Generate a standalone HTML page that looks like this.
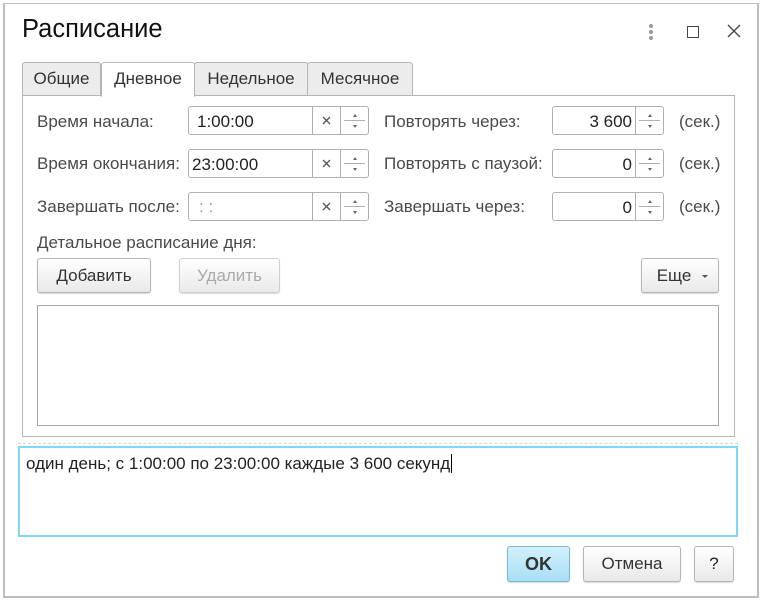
<!DOCTYPE html>
<html><head><meta charset="utf-8"><style>
*{box-sizing:border-box;margin:0;padding:0}
body{width:763px;height:603px;background:#fff;font-family:"Liberation Sans",sans-serif;font-size:17px;color:#4a4a4a;position:relative;overflow:hidden}
.a{position:absolute}
.win{left:3px;top:3px;width:756px;height:595px;border:2px solid #bdbdbd;border-top-width:1px;border-right-width:2px}
.tab{position:absolute;top:62px;height:34px;border:1px solid #b5b5b5;background:#ececec;border-radius:3px 3px 0 0;text-align:center;line-height:32px;color:#333}
.inp{position:absolute;border:1px solid #b0b0b0;border-radius:3px;height:29px;background:#fff}
.lbl{position:absolute;line-height:20px}
.btn{position:absolute;border:1px solid #b5b5b5;border-radius:3px;background:linear-gradient(#fff,#e9e9e9);text-align:center;color:#333;box-shadow:0 1px 1px rgba(0,0,0,.15)}
.spin{position:absolute;top:0;bottom:0;border-left:1px solid #b0b0b0}
.spin:before{content:"";position:absolute;left:3px;right:3px;top:13px;border-top:1px solid #b0b0b0}
.spin i{position:absolute;left:50%;width:0;height:0;margin-left:-2px;border-left:2px solid transparent;border-right:2px solid transparent}
</style></head><body>
<div class="a win"></div>
<div class="a" style="left:22px;top:15px;font-size:25.5px;color:#111">Расписание</div>
<div class="a" style="left:649px;top:24px;width:4px;height:16px">
<div class="a" style="left:0;top:0;width:4px;height:4px;border-radius:2px;background:#999"></div>
<div class="a" style="left:0;top:6px;width:4px;height:4px;border-radius:2px;background:#999"></div>
<div class="a" style="left:0;top:12px;width:4px;height:4px;border-radius:2px;background:#999"></div></div>
<div class="a" style="left:687px;top:26px;width:12px;height:12px;border:1.5px solid #444"></div>
<svg class="a" style="left:727px;top:24px" width="14" height="14"><path d="M1 1L13 13M13 1L1 13" stroke="#444" stroke-width="1.3"/></svg>

<div class="a" style="left:22px;top:95px;width:713px;height:342px;border:1px solid #b5b5b5"></div>
<div class="tab" style="left:22px;width:79px">Общие</div>
<div class="tab" style="left:101px;width:94px;background:#fff;border-bottom-color:#fff;height:35px">Дневное</div>
<div class="tab" style="left:194px;width:114px">Недельное</div>
<div class="tab" style="left:307px;width:106px">Месячное</div>

<div class="lbl" style="left:37px;top:112px">Время начала:</div>
<div class="lbl" style="left:37px;top:154px">Время окончания:</div>
<div class="lbl" style="left:37px;top:197px">Завершать после:</div>

<div class="inp" style="left:188px;top:106px;width:181px"><span class="a" style="left:8px;top:5px;color:#222">1:00:00</span></div>
<div class="inp" style="left:188px;top:149px;width:181px"><span class="a" style="left:3px;top:5px;color:#222">23:00:00</span></div>
<div class="inp" style="left:188px;top:192px;width:181px"><span class="a" style="left:10px;top:4px;color:#999">: :</span></div>

<div class="lbl" style="left:384px;top:112px">Повторять через:</div>
<div class="lbl" style="left:384px;top:154px">Повторять с паузой:</div>
<div class="lbl" style="left:384px;top:197px">Завершать через:</div>
<div class="inp" style="left:552px;top:106px;width:112px"><span class="a" style="right:31px;top:5px;color:#222">3 600</span></div>
<div class="inp" style="left:552px;top:149px;width:112px"><span class="a" style="right:31px;top:5px;color:#222">0</span></div>
<div class="inp" style="left:552px;top:192px;width:112px"><span class="a" style="right:31px;top:5px;color:#222">0</span></div>
<div class="lbl" style="left:679px;top:112px">(сек.)</div>
<div class="lbl" style="left:679px;top:154px">(сек.)</div>
<div class="lbl" style="left:679px;top:197px">(сек.)</div>

<div class="lbl" style="left:37px;top:233px">Детальное расписание дня:</div>
<div class="btn" style="left:37px;top:258px;width:114px;height:35px;line-height:33px">Добавить</div>
<div class="btn" style="left:179px;top:258px;width:101px;height:35px;line-height:33px;color:#aaa;border-color:#d0d0d0">Удалить</div>
<div class="btn" style="left:641px;top:258px;width:78px;height:35px;line-height:33px;padding-right:12px">Еще<i class="a" style="right:10px;top:16px;border-left:3px solid transparent;border-right:3px solid transparent;border-top:3px solid #555"></i></div>
<div class="a" style="left:37px;top:305px;width:682px;height:121px;border:1px solid #a8a8a8"></div>

<div class="a" style="left:18px;top:443px;width:720px;border-top:1px dashed #d5d5d5"></div>
<div class="a" style="left:18px;top:446px;width:720px;height:91px;border:2px solid #7fd8f8"></div>
<div class="a" style="left:26px;top:454px;color:#222">один день; с 1:00:00 по 23:00:00 каждые 3 600 секунд<span style="border-left:1px solid #000;margin-left:1px"></span></div>

<div class="btn" style="left:507px;top:546px;width:63px;height:36px;line-height:34px;background:linear-gradient(#d3f0fc,#a9def4);border-color:#7ab8d4;font-weight:bold;font-size:18px">OK</div>
<div class="btn" style="left:583px;top:546px;width:98px;height:36px;line-height:34px">Отмена</div>
<div class="btn" style="left:694px;top:546px;width:40px;height:36px;line-height:34px;color:#222">?</div>

<script>
document.querySelectorAll('.inp').forEach(function(e){
 var w=e.offsetWidth, big=w>150;
 var s=document.createElement('div');s.className='spin';s.style.left=(w-30)+'px';s.style.width='28px';
 s.innerHTML='<i style="top:7px;border-bottom:3px solid #666"></i><i style="top:18px;border-top:3px solid #666"></i>';
 e.appendChild(s);
 if(big){var x=document.createElement('div');x.className='a';x.style.cssText='left:'+(w-58)+'px;top:0;width:28px;height:27px;border-left:1px solid #b0b0b0';
 x.innerHTML='<svg style="position:absolute;left:9px;top:9px" width="9" height="9"><path d="M1 1L8 8M8 1L1 8" stroke="#555" stroke-width="1.3"/></svg>';e.appendChild(x);}
});
</script>
</body></html>
